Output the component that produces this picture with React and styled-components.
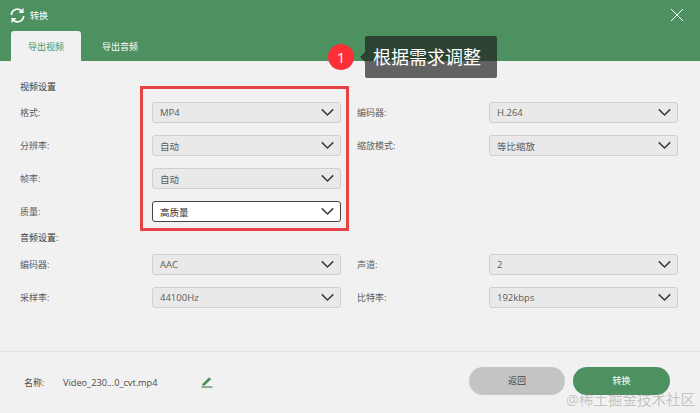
import React from "react";
import styled, { createGlobalStyle } from "styled-components";

const GlobalStyle = createGlobalStyle`
  html, body {
    margin: 0;
    padding: 0;
    background: #f1f1f1;
  }
  * {
    box-sizing: border-box;
  }
`;

const videoRows = [
  { label: "格式:", value: "MP4", right: "编码器:", rightValue: "H.264" },
  { label: "分辨率:", value: "自动", right: "缩放模式:", rightValue: "等比缩放" },
  { label: "帧率:", value: "自动" },
  { label: "质量:", value: "高质量", active: true },
];

const audioRows = [
  { label: "编码器:", value: "AAC", right: "声道:", rightValue: "2" },
  { label: "采样率:", value: "44100Hz", right: "比特率:", rightValue: "192kbps" },
];

function Chevron() {
  return (
    <ChevronIcon width="13" height="9" viewBox="0 0 13 9">
      <path d="M0.8 1.4 L6.5 7 L12.2 1.4" fill="none" stroke="#3a3a3a" strokeWidth="1.5" />
    </ChevronIcon>
  );
}

function Select({ value, active }) {
  return (
    <SelectBox $active={active}>
      <span>{value}</span>
      <Chevron />
    </SelectBox>
  );
}

function Row({ row }) {
  return (
    <FieldRow>
      <Label>{row.label}</Label>
      <Select value={row.value} active={row.active} />
      {row.right && <RightLabel>{row.right}</RightLabel>}
      {row.right && <Select value={row.rightValue} />}
    </FieldRow>
  );
}

export default function App() {
  return (
    <Window>
      <GlobalStyle />
      <Header>
        <TitleBar>
          <RefreshIcon width="15" height="15" viewBox="0 0 15 15" fill="none" stroke="#fff" strokeWidth="1.7">
            <path d="M1.4 7 A6 6 0 0 1 12 3.4" />
            <path d="M13.6 8 A6 6 0 0 1 3 11.6" />
            <path d="M12.9 0.6 V4.2 H9.3" strokeWidth="1.4" />
            <path d="M2.1 14.4 V10.8 H5.7" strokeWidth="1.4" />
          </RefreshIcon>
          <WindowTitle>转换</WindowTitle>
          <CloseIcon width="14" height="14" viewBox="0 0 14 14">
            <path d="M1 1 L13 13 M13 1 L1 13" stroke="#fff" strokeWidth="1" />
          </CloseIcon>
        </TitleBar>
        <Tabs>
          <Tab $active>导出视频</Tab>
          <Tab>导出音频</Tab>
        </Tabs>
      </Header>

      <Content>
        <SectionTitle>视频设置</SectionTitle>
        <Rows>
          {videoRows.map((row) => (
            <Row key={row.label} row={row} />
          ))}
        </Rows>
        <AudioTitle>音频设置:</AudioTitle>
        <Rows>
          {audioRows.map((row) => (
            <Row key={row.label} row={row} />
          ))}
        </Rows>
      </Content>

      <Footer>
        <NameGroup>
          <NameLabel>名称:</NameLabel>
          <FileName>Video_230...0_cvt.mp4</FileName>
          <svg width="12" height="12" viewBox="0 0 12 12">
            <path d="M1.2 8.2 L7.8 1.4 L10.4 3 L3.6 9.4 L1 9.6 Z" fill="#4d9160" />
            <rect x="0.6" y="10.4" width="10.8" height="1.3" fill="#4d9160" />
          </svg>
        </NameGroup>
        <BackButton>返回</BackButton>
        <ConvertButton>转换</ConvertButton>
      </Footer>

      <Highlight />
      <Badge>1</Badge>
      <Callout>根据需求调整</Callout>
      <Watermark>@稀土掘金技术社区</Watermark>
    </Window>
  );
}

const Window = styled.div`
  position: relative;
  width: 700px;
  height: 413px;
  overflow: hidden;
  background: #f1f1f1;
  font-family: "Open Sans", "Noto Sans CJK SC", sans-serif;
  color: #444;
`;

const Header = styled.div`
  height: 61px;
  background: #4d9160;
  padding-left: 11px;
  display: flex;
  flex-direction: column;
`;

const TitleBar = styled.div`
  height: 31px;
  display: flex;
  align-items: center;
  padding-right: 16px;
  gap: 5px;
`;

const RefreshIcon = styled.svg`
  display: block;
  margin-left: -1px;
`;

const WindowTitle = styled.div`
  font-size: 9px;
  color: #fff;
  flex: 1;
`;

const CloseIcon = styled.svg`
  display: block;
  margin-bottom: 1px;
`;

const Tabs = styled.div`
  display: flex;
`;

const Tab = styled.div`
  width: 70px;
  height: 30px;
  margin-right: 4px;
  border-radius: 3px 3px 0 0;
  display: flex;
  align-items: center;
  justify-content: center;
  font-size: 9px;
  color: ${(p) => (p.$active ? "#4d9160" : "#fff")};
  background: ${(p) => (p.$active ? "#f1f1f1" : "transparent")};
`;

const Content = styled.div`
  height: 290px;
  padding: 19px 21px 0 20px;
`;

const SectionTitle = styled.div`
  font-size: 9px;
  line-height: 14px;
  color: #3a3a3a;
`;

const AudioTitle = styled(SectionTitle)`
  margin-top: 9px;
  margin-bottom: 9px;
`;

const Rows = styled.div`
  display: flex;
  flex-direction: column;
  gap: 12px;
  &:nth-of-type(2) {
    padding-top: 8px;
  }
`;

const FieldRow = styled.div`
  display: grid;
  grid-template-columns: 132px 189px 148px 189px;
  align-items: center;
  height: 21px;
`;

const Label = styled.div`
  font-size: 9px;
  color: #5c5c5c;
`;

const RightLabel = styled(Label)`
  padding-left: 16px;
`;

const SelectBox = styled.div`
  height: 21px;
  padding: 0 6px 0 7px;
  display: flex;
  align-items: center;
  justify-content: space-between;
  font-size: 9.5px;
  color: ${(p) => (p.$active ? "#333" : "#5c5c5c")};
  border-radius: 3px;
  border: 1px solid ${(p) => (p.$active ? "#444" : "#cfcfcf")};
  background: ${(p) => (p.$active ? "#fff" : "#e9e9e9")};
`;

const ChevronIcon = styled.svg`
  display: block;
`;

const Footer = styled.div`
  height: 62px;
  border-top: 1px solid #e2e2e2;
  display: flex;
  align-items: center;
  padding: 0 30px 4px 24px;
`;

const NameGroup = styled.div`
  flex: 1;
  display: flex;
  align-items: center;
  padding-top: 3px;
`;

const NameLabel = styled.div`
  width: 39px;
  font-size: 9px;
  color: #4a4a4a;
`;

const FileName = styled.div`
  width: 138px;
  font-size: 9.2px;
  color: #4a4a4a;
`;

const BackButton = styled.div`
  width: 96px;
  height: 28px;
  border-radius: 14px;
  background: #c4c4c4;
  color: #444;
  font-size: 9px;
  display: flex;
  align-items: center;
  justify-content: center;
`;

const ConvertButton = styled(BackButton)`
  width: 97px;
  margin-left: 8px;
  background: #4d9160;
  color: #fff;
`;

const Highlight = styled.div`
  position: absolute;
  left: 140px;
  top: 86px;
  width: 209px;
  height: 145px;
  border: 3px solid #e54345;
`;

const Badge = styled.div`
  position: absolute;
  left: 328px;
  top: 44px;
  width: 26px;
  height: 26px;
  border-radius: 50%;
  background: #fb3037;
  color: #fff;
  font-size: 15px;
  display: flex;
  align-items: center;
  justify-content: center;
`;

const Callout = styled.div`
  position: absolute;
  left: 365px;
  top: 36px;
  width: 132px;
  height: 42px;
  border-radius: 2px;
  background: rgba(30, 30, 30, 0.68);
  color: #fff;
  font-size: 18px;
  line-height: 42px;
  padding-left: 8px;
  white-space: nowrap;
  &::before {
    content: "";
    position: absolute;
    left: -5px;
    top: 16px;
    border-style: solid;
    border-width: 5px 5px 5px 0;
    border-color: transparent rgba(30, 30, 30, 0.68) transparent transparent;
  }
`;

const Watermark = styled.div`
  position: absolute;
  right: 5px;
  bottom: 4px;
  font-size: 14.5px;
  line-height: 18px;
  color: rgba(130, 130, 130, 0.42);
  white-space: nowrap;
`;
